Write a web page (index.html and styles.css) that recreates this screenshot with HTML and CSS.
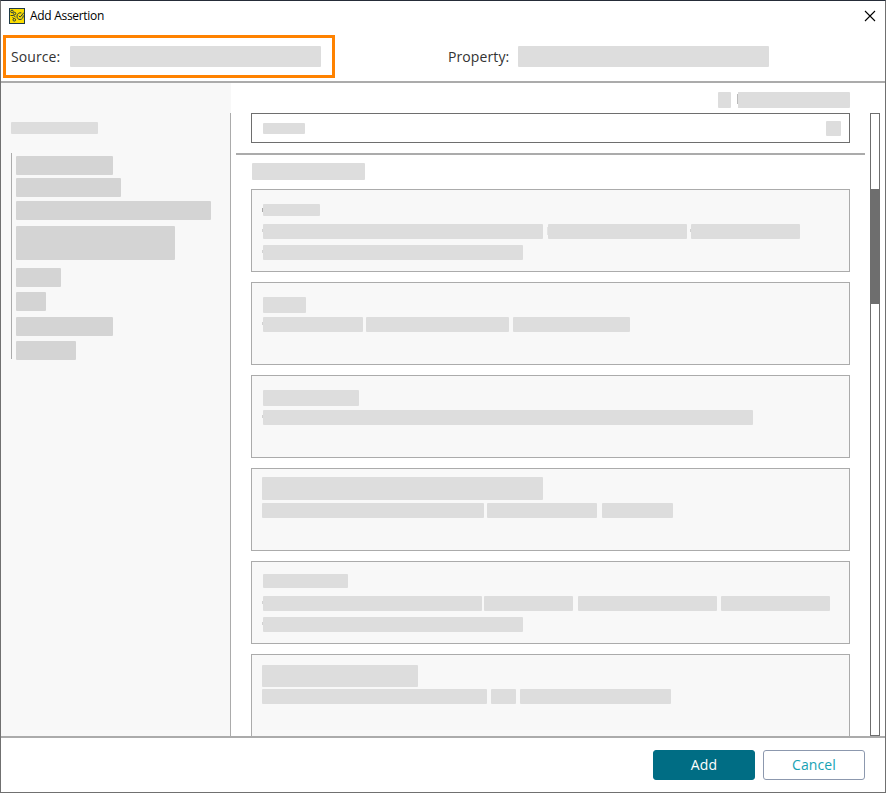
FILE: index.html
```html
<!DOCTYPE html>
<html lang="en">
<head>
<meta charset="utf-8">
<title>Add Assertion</title>
<link rel="stylesheet" href="styles.css">
</head>
<body>
<div class="dialog">
  <header class="titlebar">
    <svg class="app-icon" viewBox="0 0 16 16" width="16" height="16">
      <rect width="16" height="16" fill="#1f3a47"/>
      <rect x="1" y="1" width="14" height="14" fill="#fbdc00"/>
      <g fill="none" stroke="#263e40" stroke-width="1">
        <circle cx="3" cy="3.500" r="1.300"/>
        <circle cx="5.600" cy="5.500" r="1.200"/>
        <path d="M1.500 7.500h3.200L6.500 9M3.500 9.500L5 10.500"/>
        <circle cx="5.300" cy="11.800" r="1.300"/>
        <path d="M14.200 7.300c.3 2.400-1.300 4.200-3.200 4.200-2 0-3.200-1.600-3-3.600.2-2.200 2.200-3.600 4.400-3M9.800 7.800l1.400 1.300L15 4.500"/>
      </g>
    </svg>
    <h1 class="title">Add Assertion</h1>
    <button class="close" aria-label="Close">
      <svg viewBox="0 0 10 10" width="10" height="10"><path d="M0 0l10 10M10 0L0 10" stroke="#000" stroke-width="1.1"/></svg>
    </button>
  </header>

  <section class="context">
    <div class="field source"><span class="label">Source:</span><i class="bar value"></i></div>
    <div class="field property"><span class="label">Property:</span><i class="bar value"></i></div>
  </section>

  <main class="content">
    <aside class="sidebar">
      <i class="bar heading"></i>
      <div class="categories">
        <i class="bar c1"></i><i class="bar c2"></i><i class="bar c3"></i><i class="bar c4"></i>
        <i class="bar c5"></i><i class="bar c6"></i><i class="bar c7"></i><i class="bar c8"></i>
      </div>
    </aside>
    <section class="results">
      <div class="options"><i class="bar check"></i><i class="bar check-label"></i></div>
      <div class="search"><i class="bar hint"></i><i class="bar glass"></i></div>
      <hr class="divider">
      <i class="bar section-title"></i>
      <div class="cards">
        <article class="card card-1">
          <i class="bar name tick"></i>
          <div class="line"><i class="bar w280 tick"></i><i class="bar w139 tick"></i><i class="bar w109 tick"></i></div>
          <div class="line"><i class="bar w260 tick"></i></div>
        </article>
        <article class="card card-2">
          <i class="bar name"></i>
          <div class="line"><i class="bar w100 tick"></i><i class="bar w143"></i><i class="bar w117"></i></div>
        </article>
        <article class="card card-3">
          <i class="bar name"></i>
          <div class="line"><i class="bar w490 tick"></i></div>
        </article>
        <article class="card card-4">
          <i class="bar name"></i>
          <div class="line"><i class="bar w222"></i><i class="bar w110"></i><i class="bar w71"></i></div>
        </article>
        <article class="card card-5">
          <i class="bar name"></i>
          <div class="line"><i class="bar w219 tick"></i><i class="bar w89"></i><i class="bar w139"></i><i class="bar w109"></i></div>
          <div class="line"><i class="bar w260 tick"></i></div>
        </article>
        <article class="card card-6">
          <i class="bar name"></i>
          <div class="line"><i class="bar w225"></i><i class="bar w25"></i><i class="bar w151"></i></div>
        </article>
      </div>
    </section>
    <div class="scrollbar"><div class="thumb"></div></div>
  </main>

  <footer class="footer">
    <button class="btn primary">Add</button>
    <button class="btn secondary">Cancel</button>
  </footer>
</div>
</body>
</html>
```
FILE: styles.css
```css
* { box-sizing: border-box; }

body {
  margin: 0;
  font-family: "Open Sans", "Noto Sans", sans-serif;
  color: #333;
}

.dialog {
  display: flex;
  flex-direction: column;
  width: 886px;
  height: 793px;
  border: 1px solid #707070;
  border-top-color: #252c38;
  background: #fff;
  overflow: hidden;
}

.bar {
  display: block;
  flex: none;
  background: #ddd;
  border-radius: 1px;
}

/* Title bar */
.titlebar {
  display: flex;
  align-items: center;
  height: 30px;
  padding: 0 10px 0 8px;
}
.app-icon { display: block; margin-top: -1px; }
.title {
  margin: 0 auto 0 5px;
  font: 400 12px/16px "Open Sans", sans-serif;
  letter-spacing: -0.3px;
  color: #000;
}
.close { padding: 0; border: 0; background: none; line-height: 0; margin-top: -1px; }
.close svg { overflow: visible; display: block; }

/* Source and property */
.context {
  display: flex;
  align-items: flex-start;
  height: 52px;
  padding: 4px 0 0 2px;
  border-bottom: 2px solid #ababab;
}
.field {
  display: flex;
  align-items: center;
  height: 43px;
  font-size: 14px;
}
.source {
  width: 332px;
  padding-left: 5px;
  border: 3px solid #ff8200;
}
.property { margin-left: 113px; }
.source .label { width: 59px; }
.property .label { width: 70px; }
.label { letter-spacing: 0.1px; }
.value { width: 251px; height: 21px; }

/* Body */
.content {
  display: flex;
  height: 653px;
}
.sidebar {
  width: 230px;
  padding: 39px 0 0 10px;
  background: linear-gradient(#ababab, #ababab) right 30px / 1px 100% no-repeat #f8f8f8;
}
.heading { width: 87px; height: 12px; }
.categories {
  height: 206px;
  margin-top: 19px;
  padding: 3px 0 0 4px;
  border-left: 1px solid #ababab;
}
.categories .bar { height: 19px; background: #d4d4d4; }
.categories .c1 { width: 97px; }
.categories .c2 { width: 105px; margin-top: 3px; }
.categories .c3 { width: 195px; margin-top: 4px; }
.categories .c4 { width: 159px; height: 34px; margin-top: 6px; }
.categories .c5 { width: 45px; margin-top: 8px; }
.categories .c6 { width: 30px; margin-top: 5px; }
.categories .c7 { width: 97px; margin-top: 6px; }
.categories .c8 { width: 60px; margin-top: 5px; }

.results {
  width: 634px;
  padding: 9px 15px 0 20px;
  overflow: hidden;
}
.options {
  display: flex;
  justify-content: flex-end;
  gap: 6px;
}
.check { width: 13px; height: 16px; }
.check-label {
  width: 113px;
  height: 16px;
  background: linear-gradient(#bbb, #bbb) 0 2px / 1px 10px no-repeat, linear-gradient(#ddd, #ddd) 1px 0 no-repeat;
}
.search {
  display: flex;
  align-items: center;
  justify-content: space-between;
  height: 30px;
  margin-top: 5px;
  padding: 0 8px 0 11px;
  border: 1px solid #6e6e6e;
}
.hint { width: 42px; height: 11px; }
.glass { width: 15px; height: 15px; }
.divider {
  height: 2px;
  margin: 10px -15px 8px;
  border: 0;
  background: #ababab;
}
.section-title { width: 113px; height: 17px; margin-left: 1px; }

/* Assertion cards */
.cards {
  display: flex;
  flex-direction: column;
  gap: 10px;
  margin-top: 9px;
}
.card {
  flex: none;
  height: 83px;
  padding-left: 11px;
  border: 1px solid #ababab;
  background: #f8f8f8;
}
.card-4, .card-6 { padding-left: 10px; }
.line { display: flex; height: 15px; }
.line + .line { margin-top: 6px; }
.line .bar { height: 15px; }

/* Faint mark at the leading edge of a bar */
.tick { position: relative; }
.tick::before {
  content: "";
  position: absolute;
  left: -1px;
  top: 5px;
  width: 1px;
  height: 3px;
  background: #d2d2d2;
}

.card-1 { padding-top: 14px; }
.card-1 .name { width: 57px; height: 12px; margin-bottom: 8px; }
.card-1 .name::before { top: 4px; height: 4px; background: #aaa; }
.card-1 .w139 { margin-left: 5px; }
.card-1 .w139::before { top: 3px; height: 8px; background: #e4e4e4; }
.card-1 .w109 { margin-left: 4px; }
.card-2 { padding-top: 14px; }
.card-2 .name { width: 43px; height: 16px; margin-bottom: 4px; }
.card-2 .w143 { margin-left: 3px; }
.card-2 .w117 { margin-left: 4px; }
.card-3 { padding-top: 14px; }
.card-3 .name { width: 96px; height: 16px; margin-bottom: 4px; }
.card-4 { padding-top: 8px; }
.card-4 .name { width: 281px; height: 23px; margin-bottom: 3px; }
.card-4 .w110 { margin-left: 3px; }
.card-4 .w71 { margin-left: 5px; }
.card-5 { padding-top: 12px; }
.card-5 .name { width: 85px; height: 14px; margin-bottom: 8px; }
.card-5 .w89 { margin-left: 2px; }
.card-5 .w139 { margin-left: 5px; }
.card-5 .w109 { margin-left: 4px; }
.card-6 { padding-top: 10px; }
.card-6 .name { width: 156px; height: 22px; margin-bottom: 2px; }
.card-6 .w25, .card-6 .w151 { margin-left: 4px; }

.w25 { width: 25px; }
.w71 { width: 71px; }
.w89 { width: 89px; }
.w100 { width: 100px; }
.w109 { width: 109px; }
.w110 { width: 110px; }
.w117 { width: 117px; }
.w139 { width: 139px; }
.w143 { width: 143px; }
.w151 { width: 151px; }
.w219 { width: 219px; }
.w222 { width: 222px; }
.w225 { width: 225px; }
.w260 { width: 260px; }
.w280 { width: 280px; }
.w490 { width: 490px; }

.scrollbar {
  width: 10px;
  height: 623px;
  margin: 30px 0 0 5px;
  padding-top: 75px;
  border: 1px solid #6e6e6e;
}
.thumb { height: 115px; margin: 0 -1px; background: #6e6e6e; }

/* Footer */
.footer {
  display: flex;
  justify-content: flex-end;
  gap: 8px;
  height: 56px;
  padding: 12px 20px 0 0;
  border-top: 2px solid #ababab;
}
.btn {
  width: 102px;
  height: 30px;
  padding: 0;
  border: 1px solid #006d84;
  border-radius: 3px;
  font: 400 14px/28px "Open Sans", "Noto Sans", sans-serif;
  letter-spacing: 0.1px;
}
.primary { background: #006d84; color: #fff; }
.secondary { background: #fff; border-color: #8c98ae; color: #16a2b4; }
```
